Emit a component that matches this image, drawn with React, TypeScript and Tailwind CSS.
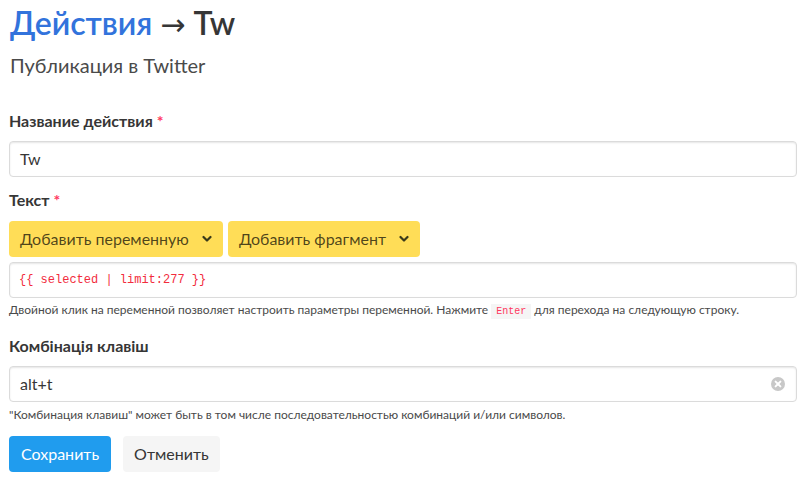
import React from "react";

const Chevron = () => (
  <svg width="10" height="10" viewBox="0 0 10 10" className="ml-[13px]">
    <path d="M1.5 3 L5 6.5 L8.5 3" fill="none" stroke="#3a3a1a" strokeWidth="2.2" strokeLinecap="round" strokeLinejoin="round" />
  </svg>
);

const inputCls =
  "h-[36px] w-full rounded-[4px] border border-[#dbdbdb] shadow-[inset_0_1px_2px_rgba(10,10,10,0.1)] flex items-center";

export default function App() {
  return (
    <div
      className="w-[807px] h-[479px] bg-white pl-[9px] pr-[10px] pt-[5px] text-[#4a4a4a] overflow-hidden"
      style={{ fontFamily: 'Lato, "Noto Sans", sans-serif' }}
    >
      <h1 className="pl-[1px] h-[36px] text-[32px] leading-[36px] font-semibold text-[#363636] whitespace-nowrap">
        <span className="text-[#3273dc]">Действия</span>{" "}
        <span className="text-[30px]" style={{ fontFamily: '"DejaVu Sans", sans-serif', fontWeight: 400 }}>→</span> Tw
      </h1>
      <div className="pl-[1px] mt-[12px] h-[25px] text-[20px] leading-[25px] text-[#4a4a4a]">Публикация в Twitter</div>

      <label className="block mt-[31px] h-[24px] text-[16px] leading-[24px] font-bold text-[#363636]">
        Название действия <span className="text-[#ff3860]">*</span>
      </label>
      <div className={`mt-[8px] ${inputCls} px-[10px] text-[16px] text-[#363636]`}>Tw</div>

      <label className="block mt-[11px] h-[24px] text-[16px] leading-[24px] font-bold text-[#363636]">
        Текст <span className="text-[#ff3860]">*</span>
      </label>
      <div className="mt-[9px] flex gap-[5px]">
        <div className="h-[36px] px-[11px] rounded-[4px] bg-[#ffdd57] flex items-center text-[16px] text-[rgba(0,0,0,0.7)]">
          Добавить переменную <Chevron />
        </div>
        <div className="h-[36px] px-[11px] rounded-[4px] bg-[#ffdd57] flex items-center text-[16px] text-[rgba(0,0,0,0.7)]">
          Добавить фрагмент <Chevron />
        </div>
      </div>
      <div
        className={`mt-[5px] ${inputCls} px-[9px] text-[12px] text-[#f22c3d]`}
        style={{ fontFamily: '"Liberation Mono", monospace' }}
      >
        {"{{ selected | limit:277 }}"}
      </div>
      <div className="mt-[3px] h-[18px] text-[12px] leading-[18px] text-[#4a4a4a] whitespace-nowrap">
        Двойной клик на переменной позволяет настроить параметры переменной. Нажмите{" "}
        <code
          className="bg-[#f5f5f5] text-[#ff3860] text-[10px] leading-[14px] px-[5px] py-[2px]"
          style={{ fontFamily: '"Liberation Mono", monospace' }}
        >
          Enter
        </code>{" "}
        для перехода на следующую строку.
      </div>

      <label className="block mt-[15px] h-[24px] text-[16px] leading-[24px] font-bold text-[#363636]">
        Комбінація клавіш
      </label>
      <div className={`mt-[8px] ${inputCls} justify-between pl-[10px] pr-[11px] text-[16px] text-[#363636]`}>
        <span>alt+t</span>
        <svg width="14" height="14" viewBox="0 0 14 14">
          <circle cx="7" cy="7" r="7" fill="#c8c8c8" />
          <path d="M4.6 4.6 L9.4 9.4 M9.4 4.6 L4.6 9.4" stroke="#fff" strokeWidth="2" strokeLinecap="round" />
        </svg>
      </div>
      <div className="mt-[4px] h-[18px] text-[12px] leading-[18px] text-[#4a4a4a]">
        "Комбинация клавиш" может быть в том числе последовательностью комбинаций и/или символов.
      </div>

      <div className="mt-[12px] flex gap-[12px]">
        <div className="h-[36px] px-[12px] rounded-[4px] bg-[#209cee] text-white flex items-center text-[16px]">Сохранить</div>
        <div className="h-[36px] px-[11px] rounded-[4px] bg-[#f5f5f5] text-[#363636] flex items-center text-[16px]">Отменить</div>
      </div>
    </div>
  );
}
